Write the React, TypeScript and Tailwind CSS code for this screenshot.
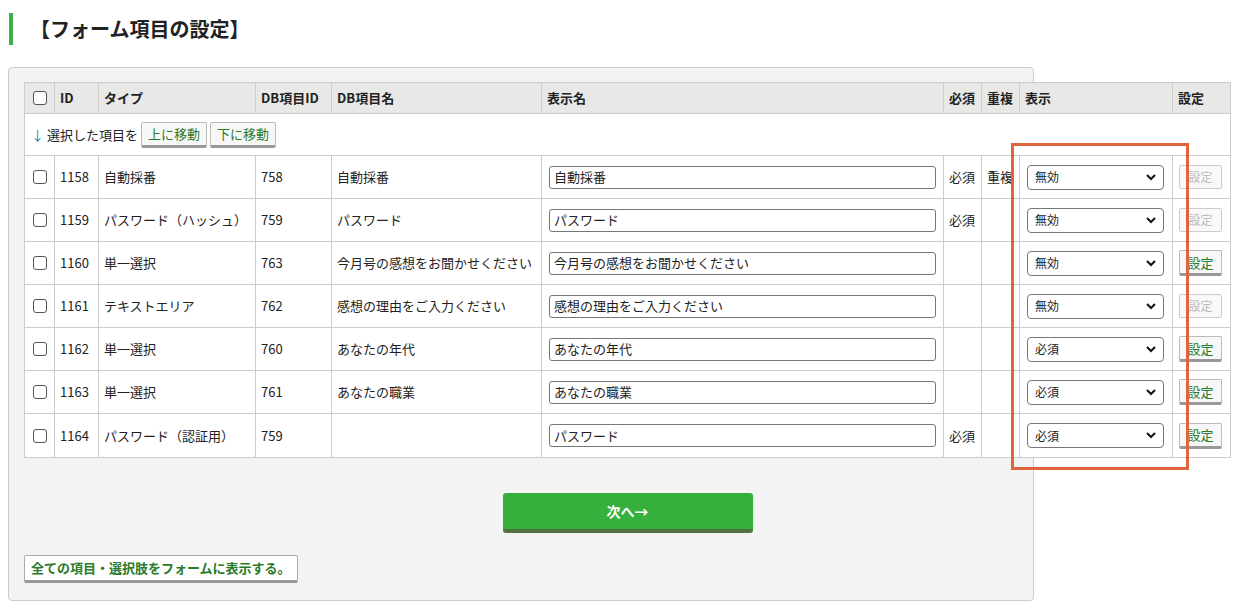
import React from "react";

const rows = [
  { id: "1158", type: "自動採番", dbid: "758", dbname: "自動採番", label: "自動採番", req: "必須", dup: "重複", show: "無効", enabled: false },
  { id: "1159", type: "パスワード（ハッシュ）", dbid: "759", dbname: "パスワード", label: "パスワード", req: "必須", dup: "", show: "無効", enabled: false },
  { id: "1160", type: "単一選択", dbid: "763", dbname: "今月号の感想をお聞かせください", label: "今月号の感想をお聞かせください", req: "", dup: "", show: "無効", enabled: true },
  { id: "1161", type: "テキストエリア", dbid: "762", dbname: "感想の理由をご入力ください", label: "感想の理由をご入力ください", req: "", dup: "", show: "無効", enabled: false },
  { id: "1162", type: "単一選択", dbid: "760", dbname: "あなたの年代", label: "あなたの年代", req: "", dup: "", show: "必須", enabled: true },
  { id: "1163", type: "単一選択", dbid: "761", dbname: "あなたの職業", label: "あなたの職業", req: "", dup: "", show: "必須", enabled: true },
  { id: "1164", type: "パスワード（認証用）", dbid: "759", dbname: "", label: "パスワード", req: "必須", dup: "", show: "必須", enabled: true },
];

const cols = "grid grid-cols-[30px_44px_157px_76px_210px_402px_38px_38px_153px_58px]";
const cell = "border-r border-[#cccccc] flex items-center px-[5px] last:border-r-0";

function Box() {
  return <span className="inline-block w-[14px] h-[14px] border border-[#555] rounded-[3px] bg-white" />;
}

function Btn({ children, cls = "" }: { children: React.ReactNode; cls?: string }) {
  return (
    <button className={`h-[26px] px-[6px] bg-[#f7f7f7] border border-[#bbb] border-b-[3px] border-b-[#999] rounded-[2px] text-[#2a7a2a] text-[13px] leading-none ${cls}`}>
      {children}
    </button>
  );
}

export default function App() {
  return (
    <div className="w-[1237px] h-[610px] bg-white text-[#222] text-[13px] relative overflow-hidden" style={{ fontFamily: '"Noto Sans CJK JP", "Noto Sans", sans-serif' }}>
      <div className="pt-[13px] pl-[9px] flex">
        <div className="border-l-[4px] border-[#3cb043] h-[32px] pl-[17px] flex items-center text-[20px] font-bold">【フォーム項目の設定】</div>
      </div>
      <div className="mt-[22px] ml-[8px] w-[1026px] h-[534px] bg-[#f3f3f3] border border-[#cccccc] rounded-[4px] pt-[14px] pl-[15px]">
        <div className="w-[1207px] border border-[#cccccc] bg-white">
          <div className={`${cols} h-[31px] bg-[#e8e9e7] border-b border-[#cccccc] font-bold`}>
            <div className={`${cell} justify-center`}><Box /></div>
            <div className={cell}>ID</div>
            <div className={cell}>タイプ</div>
            <div className={cell}>DB項目ID</div>
            <div className={cell}>DB項目名</div>
            <div className={cell}>表示名</div>
            <div className={cell}>必須</div>
            <div className={cell}>重複</div>
            <div className={cell}>表示</div>
            <div className={cell}>設定</div>
          </div>
          <div className="h-[42px] border-b border-[#cccccc] flex items-center gap-[3px] pl-[6px]">
            <span className="text-[#2a7ac0]">↓</span>
            <span>選択した項目を</span>
            <Btn>上に移動</Btn>
            <Btn>下に移動</Btn>
          </div>
          {rows.map((r, i) => (
            <div key={r.id} className={`${cols} h-[43px] ${i < rows.length - 1 ? "border-b border-[#cccccc]" : ""}`}>
              <div className={`${cell} justify-center`}><Box /></div>
              <div className={cell}>{r.id}</div>
              <div className={cell}>{r.type}</div>
              <div className={cell}>{r.dbid}</div>
              <div className={cell}>{r.dbname}</div>
              <div className={`${cell} pl-[7px]`}>
                <div className="w-[387px] h-[23px] border border-[#777] rounded-[3px] px-[4px] flex items-center text-[13px]">{r.label}</div>
              </div>
              <div className={cell}>{r.req}</div>
              <div className={`${cell} overflow-hidden whitespace-nowrap`}>{r.dup}</div>
              <div className={`${cell} pl-[7px]`}>
                <div className="w-[137px] h-[25px] border border-[#777] rounded-[4px] flex items-center justify-between px-[7px] text-[12px]">
                  <span>{r.show}</span>
                  <svg width="10" height="7" viewBox="0 0 10 7"><path d="M1 1l4 4 4-4" stroke="#111" strokeWidth="2" fill="none" /></svg>
                </div>
              </div>
              <div className={`${cell} pl-[6px]`}>
                {r.enabled ? (
                  <Btn cls="w-[43px] px-0 text-[12px]">設定</Btn>
                ) : (
                  <button className="w-[43px] h-[24px] bg-[#f9f9f9] border border-[#ccc] rounded-[2px] text-[#bbb] text-[12px]">設定</button>
                )}
              </div>
            </div>
          ))}
        </div>
        <div className="w-[1207px] flex justify-center mt-[35px]">
          <button className="w-[250px] h-[40px] bg-[#35b03d] border-b-[4px] border-[#527040] rounded-[3px] text-white font-bold text-[14px]">次へ→</button>
        </div>
        <div className="mt-[22px]">
          <button className="h-[28px] px-[6px] bg-white border border-[#aaa] border-b-[3px] border-b-[#999] rounded-[2px] text-[#2a7a2a] text-[13px] font-bold">全ての項目・選択肢をフォームに表示する。</button>
        </div>
      </div>
      <div className="absolute left-[1011px] top-[143px] w-[178px] h-[327px] border-[3px] border-[#e0643c] pointer-events-none" />
    </div>
  );
}
